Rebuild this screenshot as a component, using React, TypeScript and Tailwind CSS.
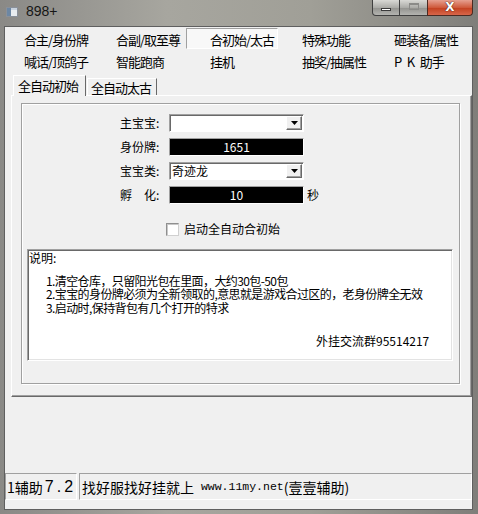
import React from 'react'

const topItems = [
  ['合主/身份牌', '合副/取至尊', '合初始/太古', '特殊功能', '砸装备/属性'],
  ['喊话/顶鸽子', '智能跑商', '挂机', '抽奖/抽属性', 'P\u2002K\u2002助手'],
]

const colPad = ['pl-[19px]', 'pl-[22px]', 'pl-[24px]', 'pl-[24px]', 'pl-[24px]']

function TitleBar() {
  return (
    <div className="flex h-[26px] items-start">
      <svg width="12" height="10" viewBox="0 0 12 10" className="ml-[6px] mt-[7px]">
        <rect x="0.5" y="0.5" width="11" height="9" fill="#e9ecef" stroke="#8a9099" />
        <rect x="1" y="1" width="4" height="8" fill="#6d87a3" />
        <rect x="5" y="1" width="6" height="2" fill="#c9d3de" />
      </svg>
      <span className="ml-[8px] mt-[3px] font-['Liberation_Sans',sans-serif] text-[14px] leading-[16px] text-[#161616]">
        898+
      </span>
      <div className="ml-auto mr-[5px] flex h-[16px]">
        <div className="flex h-[16px] w-[28px] items-end justify-center rounded-bl-[4px] border border-t-0 border-[#3f3f3f] bg-[linear-gradient(#d9d9d5,#acaca8_50%,#92928e_52%,#b4b4b0)] pb-[4px]">
          <div className="h-[3px] w-[10px] border border-[#3a3a3a] bg-white" />
        </div>
        <div className="flex h-[16px] w-[27px] items-start justify-center border-b border-[#3f3f3f] bg-[linear-gradient(#d9d9d5,#acaca8_50%,#92928e_52%,#b4b4b0)] pt-[3px]">
          <div className="h-[7px] w-[10px] border border-[#8b8b88] shadow-[inset_0_1px_0_#8b8b88]" />
        </div>
        <div className="flex h-[16px] w-[46px] items-start justify-center rounded-br-[4px] border border-t-0 border-[#4b2a22] bg-[linear-gradient(#e6a090,#cf5a3c_50%,#c2401f_52%,#d8664a)] pt-[1px]">
          <span className="font-['DejaVu_Sans',sans-serif] text-[12px] font-bold leading-[12px] text-white [text-shadow:0_0_1px_#3b1a12,0_0_1px_#3b1a12]">
            X
          </span>
        </div>
      </div>
    </div>
  )
}

function Combo({ value }: { value: string }) {
  return (
    <div className="flex h-[18px] w-[135px] items-center border border-t-[#a0a0a0] border-l-[#a0a0a0] border-r-white border-b-white bg-white shadow-[inset_1px_1px_0_#696969]">
      <span className="flex-1 pl-[2px] text-[12px] leading-[14px]">{value}</span>
      <div className="mr-[1px] flex h-[14px] w-[16px] items-center justify-center border border-t-white border-l-white border-r-[#696969] border-b-[#696969] bg-[#f0f0f0] shadow-[inset_-1px_-1px_0_#a0a0a0]">
        <svg width="7" height="4" viewBox="0 0 7 4">
          <path d="M0 0h7L3.5 4z" fill="#000" />
        </svg>
      </div>
    </div>
  )
}

function BlackBox({ value }: { value: string }) {
  return (
    <div className="flex h-[18px] w-[135px] items-center justify-center border border-t-[#a0a0a0] border-l-[#a0a0a0] border-r-white border-b-white bg-black text-[12px] leading-[14px] text-white">
      {value}
    </div>
  )
}

function Row({ label, children }: { label: string; children: React.ReactNode }) {
  return (
    <div className="flex h-[18px] items-center pl-[98px]">
      <span className="w-[49px] whitespace-pre text-[12px] leading-[14px]">{label}</span>
      {children}
    </div>
  )
}

export default function App() {
  return (
    <div className="flex h-[514px] w-[478px] flex-col overflow-hidden bg-[linear-gradient(90deg,#8a8986,#a7a69f_35%,#a09f97_65%,#7f7e7a)] font-['Noto_Sans_CJK_SC',sans-serif] text-black">
      <TitleBar />
      <div className="ml-[4px] mr-[5px] flex h-[484px] flex-col border border-[#5f5f5f] bg-[#f0f0f0]">
        <div className="grid grid-cols-[89px_92px_92px_92px_92px] gap-y-[1px] pt-[1px]">
          {topItems.map((row, r) =>
            row.map((t, c) => {
              const sel = r === 0 && c === 2
              return (
                <div
                  key={t}
                  className={
                    sel
                      ? 'flex h-[21px] items-center border border-t-[#a0a0a0] border-l-[#a0a0a0] border-r-white border-b-white bg-[#f8f8f8] pl-[23px] pt-[2px] text-[13px] leading-[16px] tracking-[-1px]'
                      : `flex h-[21px] items-center whitespace-pre ${colPad[c]} pt-[3px] text-[13px] leading-[16px] tracking-[-1px]`
                  }
                >
                  {t}
                </div>
              )
            }),
          )}
        </div>

        <div className="mt-[4px] flex h-[20px] items-end pl-[8px]">
          <div className="relative z-10 -mb-px flex h-[21px] w-[73px] items-center border-l border-t border-r border-white border-r-[#696969] bg-[#f0f0f0] pl-[4px] text-[13px] leading-[16px] tracking-[-1px]">
            全自动初始
          </div>
          <div className="ml-[1px] flex h-[17px] w-[70px] items-center border-l border-t border-r border-white border-r-[#696969] pl-[3px] pt-[1px] text-[13px] leading-[16px] tracking-[-1px]">
            全自动太古
          </div>
        </div>

        <div className="ml-[6px] h-[302px] w-[461px] border border-t-white border-l-white border-r-[#696969] border-b-[#696969] pl-[9px] pt-[7px] shadow-[inset_-1px_-1px_0_#a0a0a0]">
          <div className="flex h-[281px] w-[439px] flex-col border border-[#a0a0a0] shadow-[inset_1px_1px_0_#fff,1px_1px_0_#fff]">
            <div className="flex flex-col gap-[6px] pt-[10px]">
              <Row label="主宝宝:">
                <Combo value="" />
              </Row>
              <Row label="身份牌:">
                <BlackBox value="1651" />
              </Row>
              <Row label="宝宝类:">
                <Combo value="奇迹龙" />
              </Row>
              <Row label={'孵\u3000化:'}>
                <BlackBox value="10" />
                <span className="ml-[3px] text-[12px] leading-[14px]">秒</span>
              </Row>
            </div>

            <div className="mt-[18px] flex items-center pl-[144px]">
              <div className="h-[13px] w-[13px] border border-t-[#8f8f8f] border-l-[#8f8f8f] border-r-[#d0d0d0] border-b-[#d0d0d0] bg-white shadow-[inset_1px_1px_0_#c8c8c8]" />
              <span className="ml-[5px] text-[12px] leading-[14px]">启动全自动合初始</span>
            </div>

            <div className="ml-[5px] mt-[13px] h-[112px] w-[426px] border border-t-[#a0a0a0] border-l-[#a0a0a0] border-r-white border-b-white bg-white text-[12px] leading-[13.5px] shadow-[inset_1px_1px_0_#696969,inset_-1px_-1px_0_#e3e3e3]">
              <div className="pl-[1px] pt-[1px]">说明:</div>
              <div className="mt-[9px] pl-[18px] tracking-[-0.6px]">
                <div>1.清空仓库，只留阳光包在里面，大约30包-50包</div>
                <div className="whitespace-nowrap">2.宝宝的身份牌必须为全新领取的,意思就是游戏合过区的，老身份牌全无效</div>
                <div>3.启动时,保持背包有几个打开的特求</div>
              </div>
              <div className="mt-[20px] pl-[288px]">外挂交流群95514217</div>
            </div>
          </div>
        </div>

        <div className="flex-1" />

        <div className="flex h-[27px] gap-[2px]">
          <div className="flex w-[72px] items-center whitespace-nowrap border border-t-[#a0a0a0] border-l-[#a0a0a0] border-r-white border-b-white pl-[1px] text-[14px] leading-[16px]">
            1辅助
            <span className="ml-[2px] font-['Liberation_Sans',sans-serif] text-[16px] tracking-[3px]">7.2</span>
          </div>
          <div className="flex flex-1 items-center whitespace-pre border border-t-[#a0a0a0] border-l-[#a0a0a0] border-r-white border-b-white pl-[2px] text-[14px] leading-[16px]">
            找好服找好挂就上
            <span className="font-['Liberation_Mono',monospace] text-[11.5px]"> www.11my.net</span>
            (壹壹辅助)
          </div>
        </div>
        <div className="h-[9px]" />
      </div>
    </div>
  )
}
